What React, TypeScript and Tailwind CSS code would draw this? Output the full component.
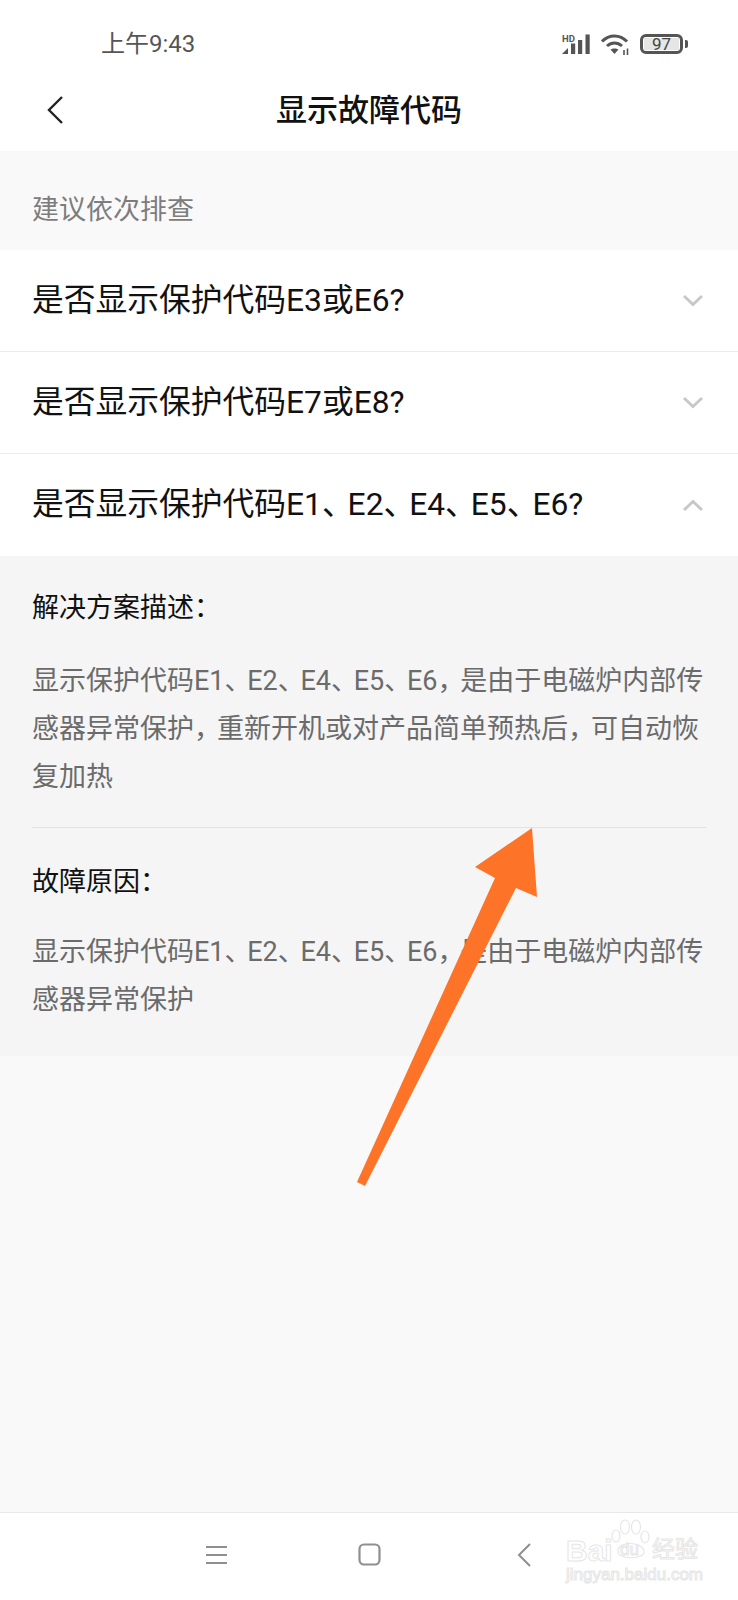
import React from 'react';

const FONT = 'font-["Roboto","Noto_Sans_CJK_SC",sans-serif]';

// the phone's system font sets 、 and ， tighter than full width
const Tight = ({ text, dun }: { text: string; dun: string }) => (
  <>
    {text.split(/([、，])/).map((part, i) =>
      part === '、' ? (
        <span key={i} className={dun}>、</span>
      ) : part === '，' ? (
        <span key={i} className="tracking-[-0.15em]">，</span>
      ) : (
        part
      )
    )}
  </>
);

const Chevron = ({ up }: { up?: boolean }) => (
  <svg width="22" height="14" viewBox="0 0 22 14" fill="none" stroke="#c8c8c8" strokeWidth="3">
    <path d={up ? 'M2 12 L11 3.5 L20 12' : 'M2 2 L11 10.5 L20 2'} />
  </svg>
);

const Question = ({ text, open, last }: { text: string; open?: boolean; last?: boolean }) => (
  <div className={`flex items-center justify-between h-[102px] pl-[32px] pr-[34px] bg-white ${last ? '' : 'border-b border-[#ececec]'}`}>
    <span className="text-[31.75px] leading-none text-[#111111]">
      <Tight text={text} dun="tracking-[-0.19em]" />
    </span>
    <Chevron up={open} />
  </div>
);

const StatusIcons = () => (
  <div className="flex items-center">
    <svg width="28" height="20" viewBox="0 0 28 20" fill="#555555">
      <text x="0" y="7.5" fontSize="9.5" fontWeight="700" fontFamily="Roboto">HD</text>
      <path d="M0 20 L6 14 V20 Z" />
      <rect x="9" y="9.5" width="4.2" height="10.5" />
      <rect x="16" y="6" width="4.2" height="14" />
      <rect x="23.500" y="0.5" width="4.2" height="19.5" />
    </svg>
    <svg className="ml-[11px]" width="29" height="21" viewBox="0 0 29 21" fill="none" stroke="#555555" strokeWidth="3">
      <path d="M1 7.5 C8 0 19 0 26 7.5" />
      <path d="M6 12 C10.500 8 16.500 8 21 12" />
      <path d="M13.500 20 L9.500 15.500 C11.500 14 15.500 14 17.500 15.500 Z" fill="#555555" stroke="none" />
      <path d="M23 16 V21 M26.500 14.500 V21" strokeWidth="1.6" />
    </svg>
    <div className="flex items-center ml-[10px]">
      <div className="w-[43px] h-[20px] border-[3px] border-[#555555] rounded-[6px] p-[1px]">
        <div className="h-full bg-[#e6e6e6] flex items-center justify-center text-[17px] leading-none text-[#444444]">97</div>
      </div>
      <div className="w-[3px] h-[8px] ml-[2px] bg-[#555555] rounded-r-[2px]" />
    </div>
  </div>
);

const NavButtons = () => (
  <div className="flex items-center h-[88px] pl-[206px] pb-[4px] bg-white border-t border-[#e8e8e8]">
    <svg width="22" height="20" viewBox="0 0 22 20" fill="none" stroke="#8f8f8f" strokeWidth="2">
      <path d="M0 2 H21 M0 10 H21 M0 18 H21" />
    </svg>
    <svg className="ml-[130px]" width="23" height="23" viewBox="0 0 23 23" fill="none" stroke="#8f8f8f" strokeWidth="2.2">
      <rect x="1.5" y="1.5" width="20" height="20" rx="4.5" />
    </svg>
    <svg className="ml-[136px]" width="14" height="24" viewBox="0 0 14 24" fill="none" stroke="#8f8f8f" strokeWidth="2">
      <path d="M13 1 L2 12 L13 23" />
    </svg>
  </div>
);

// baidu jingyan mark in the bottom corner
const Watermark = () => (
  <div className="absolute left-[566px] top-[1519px] w-[136px] h-[66px] text-transparent [-webkit-text-stroke:1px_#e6e6e6]">
    <svg className="absolute left-[44px] top-0" width="42" height="42" viewBox="0 0 42 42" fill="none" stroke="#e6e6e6" strokeWidth="1.2">
      <ellipse cx="6" cy="17" rx="4" ry="6" />
      <ellipse cx="15" cy="8" rx="4.5" ry="7" />
      <ellipse cx="26" cy="8" rx="4.5" ry="7" />
      <ellipse cx="35" cy="18" rx="4" ry="6" />
      <path d="M8 32 C8 22 32 22 34 32 C36 41 6 41 8 32 Z" />
    </svg>
    <span className="absolute left-0 top-[17px] text-[30px] leading-[30px] font-bold font-['Liberation_Sans',sans-serif]">Bai</span>
    <span className="absolute left-[54px] top-[22px] text-[17px] leading-[17px] font-['Liberation_Sans',sans-serif]">du</span>
    <span className="absolute left-[86px] top-[19px] text-[23px] leading-[24px]">经验</span>
    <span className="absolute left-0 top-[47px] text-[17px] leading-[18px] whitespace-nowrap font-['Liberation_Sans',sans-serif]">jingyan.baidu.com</span>
  </div>
);

export default function App() {
  return (
    <div className={`relative w-[738px] h-[1600px] flex flex-col bg-[#f9f9f9] overflow-hidden ${FONT}`}>
      <div className="bg-white h-[151px]">
        <div className="flex items-center justify-between h-[88px] pl-[101px] pr-[50px]">
          <span className="text-[24px] leading-none text-[#555555]">上午9:43</span>
          <StatusIcons />
        </div>
        <div className="relative flex items-center justify-center h-[47px]">
          <svg className="absolute left-[46px] top-[8px]" width="18" height="28" viewBox="0 0 18 28" fill="none" stroke="#222222" strokeWidth="2.4">
            <path d="M16 1 L3 14 L16 27" />
          </svg>
          <span className="text-[31px] leading-none font-medium text-[#111111] mt-[-2px]">显示故障代码</span>
        </div>
      </div>

      <div className="flex items-center h-[99px] pl-[32px] pt-[20px] text-[27px] text-[#7d7d7d]">建议依次排查</div>

      <Question text="是否显示保护代码E3或E6?" />
      <Question text="是否显示保护代码E7或E8?" />
      <Question text="是否显示保护代码E1、E2、E4、E5、E6?" open last />

      <div className="bg-[#f5f5f5] h-[500px] px-[32px]">
        <div className="pt-[33px] pb-[26px] border-b border-[#e2e2e2]">
          <h3 className="text-[27px] leading-[38px] font-normal text-[#111111]">解决方案描述：</h3>
          <p className="mt-[30px] text-[27px] leading-[48px] text-[#6b6b6b]">
            <Tight
              text="显示保护代码E1、E2、E4、E5、E6，是由于电磁炉内部传感器异常保护，重新开机或对产品简单预热后，可自动恢复加热"
              dun="tracking-[-0.16em]"
            />
          </p>
        </div>
        <h3 className="mt-[35px] text-[27px] leading-[38px] font-normal text-[#111111]">故障原因：</h3>
        <p className="mt-[27px] text-[27px] leading-[48px] text-[#6b6b6b]">
          <Tight
            text="显示保护代码E1、E2、E4、E5、E6，是由于电磁炉内部传感器异常保护"
            dun="tracking-[-0.16em]"
          />
        </p>
      </div>

      <div className="flex-1" />
      <NavButtons />

      {/* orange callout arrow over the panel */}
      <svg className="absolute left-0 top-0" width="738" height="1600" viewBox="0 0 738 1600" fill="#fd7429">
        <path d="M532 828 L475 867 L495 878 L357 1182 L365 1186 L516 888 L537 897 Z" />
      </svg>
      <Watermark />
    </div>
  );
}
